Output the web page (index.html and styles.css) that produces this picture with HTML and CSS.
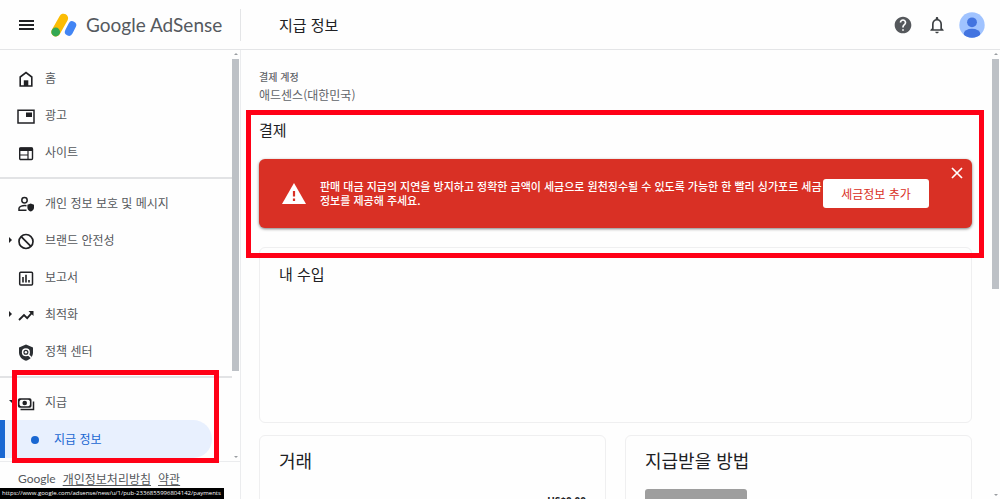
FILE: index.html
```html
<!DOCTYPE html>
<html lang="ko">
<head>
    <meta charset="UTF-8">
    <meta name="viewport" content="width=device-width, initial-scale=1.0">
    <title>지급 정보 - Google AdSense</title>
    <link rel="stylesheet" href="styles.css">
</head>
<body>
    <header class="header">
        <div class="brand">
            <button class="icon-btn" aria-label="메뉴">
                <svg width="16" height="12" viewBox="0 0 16 12"><path d="M1 2h15M1 6h15M1 10h15" stroke="#202124" stroke-width="2"/></svg>
            </button>
            <a class="logo" href="#">
                <svg width="28" height="26" viewBox="0 0 28 26" fill="none" stroke-linecap="round" stroke-width="9">
                    <path d="M13.6 6.2L5.8 20" stroke="#fbbc04"/>
                    <path d="M22.2 13.3L18.9 19.8" stroke="#4285f4" stroke-width="8"/>
                    <circle cx="5.7" cy="20" r="4.4" fill="#34a853"/>
                </svg>
                <span class="logo-text"><b>Google</b> AdSense</span>
            </a>
        </div>
        <h1>지급 정보</h1>
        <div class="actions">
            <button class="icon-btn" aria-label="도움말">
                <svg width="20" height="20" viewBox="0 0 24 24" fill="#55585c"><path d="M12 2C6.48 2 2 6.48 2 12s4.48 10 10 10 10-4.480 10-10S17.520 2 12 2zm1 17h-2v-2h2v2zm2.070-7.750l-.9.920C13.450 12.900 13 13.500 13 15h-2v-.5c0-1.100.45-2.100 1.170-2.830l1.240-1.260c.37-.36.59-.86.59-1.410 0-1.100-.9-2-2-2s-2 .9-2 2H8c0-2.210 1.790-4 4-4s4 1.790 4 4c0 .88-.36 1.680-.93 2.250z"/></svg>
            </button>
            <button class="icon-btn" aria-label="알림">
                <svg width="20" height="20" viewBox="0 0 24 24" fill="#3c4043"><path d="M12 22c1.100 0 2-.9 2-2h-4c0 1.100.9 2 2 2zm6-6v-5c0-3.070-1.630-5.640-4.500-6.320V4c0-.83-.67-1.500-1.500-1.500s-1.500.67-1.500 1.500v.68C7.640 5.360 6 7.920 6 11v5l-2 2v1h16v-1l-2-2zm-2 1H8v-6c0-2.480 1.510-4.500 4-4.500s4 2.020 4 4.500v6z"/></svg>
            </button>
            <button class="icon-btn" aria-label="계정">
                <svg width="26" height="26" viewBox="0 0 26 26">
                    <clipPath id="face"><circle cx="13" cy="13" r="12.700"/></clipPath>
                    <g clip-path="url(#face)">
                        <path d="M0 0h26v26H0z" fill="#a0c3ff"/>
                        <circle cx="13" cy="10.300" r="4.900" fill="#4374e0"/>
                        <ellipse cx="13" cy="21.800" rx="8.300" ry="5" fill="#4374e0"/>
                    </g>
                </svg>
            </button>
        </div>
    </header>

    <div class="page">
        <aside class="sidebar">
            <div class="scroll-area">
                <nav class="nav">
                    <ul class="nav-group">
                        <li><a href="#"><span class="caret"></span><svg viewBox="0 0 18 18"><path d="M3.200 7L9 2.600 14.800 7v9H3.200z" fill="none" stroke="#202124" stroke-width="1.600"/><path d="M6.800 10.300h4.500V16H6.800z" fill="#202124"/></svg>홈</a></li>
                        <li><a href="#"><span class="caret"></span><svg viewBox="0 0 18 18"><path d="M1 3.200h16v12.800H1z" fill="none" stroke="#202124" stroke-width="1.500"/><path d="M9 5.500h6v4.500H9z" fill="#202124"/></svg>광고</a></li>
                        <li><a href="#"><span class="caret"></span><svg viewBox="0 0 18 18"><rect x="2.700" y="4" width="12.800" height="11.500" rx="1" fill="none" stroke="#202124" stroke-width="1.400"/><path d="M2.500 3.500h13V7h-13z" fill="#202124"/><path d="M3 11h7.500M11 7v8" stroke="#202124" stroke-width="1.200"/></svg>사이트</a></li>
                    </ul>
                    <ul class="nav-group">
                        <li><a href="#"><span class="caret"></span><svg viewBox="0 0 18 18"><circle cx="7.500" cy="5.300" r="2.700" fill="none" stroke="#202124" stroke-width="1.500"/><path d="M9.500 10.700C5.500 10 2 11.800 2 13.300v1.900h7.500" fill="none" stroke="#202124" stroke-width="1.500"/><path d="M13.700 8.500l3.300 1.300v2.700c0 2-1.400 3.500-3.300 4-1.900-.5-3.300-2-3.300-4V9.800z" fill="#202124"/></svg>개인 정보 보호 및 메시지</a></li>
                        <li><a href="#"><span class="caret closed"></span><svg viewBox="0 0 18 18"><g fill="none" stroke="#202124" stroke-width="1.700"><circle cx="9" cy="9.500" r="7"/><path d="M4.200 4.700l9.700 9.700"/></g></svg>브랜드 안전성</a></li>
                        <li><a href="#"><span class="caret"></span><svg viewBox="0 0 18 18"><rect x="2.700" y="3.200" width="12.800" height="12.800" rx="1" fill="none" stroke="#202124" stroke-width="1.500"/><path d="M6 8v5.500M9 5.800v7.700M12 11v2.500" stroke="#202124" stroke-width="1.600"/></svg>보고서</a></li>
                        <li><a href="#"><span class="caret closed"></span><svg viewBox="0 0 18 18"><path d="M2 14l5-5 3.200 3.200 5.300-6" fill="none" stroke="#202124" stroke-width="1.800"/><path d="M11.500 5h5v5z" fill="#202124"/></svg>최적화</a></li>
                        <li><a href="#"><span class="caret"></span><svg viewBox="0 0 18 18"><path d="M9 1.500l7 3v5c0 4-2.900 7-7 8.300-4.100-1.300-7-4.300-7-8.300v-5z" fill="#2b2f33"/><circle cx="8.900" cy="9.300" r="3.300" fill="none" stroke="#fff" stroke-width="1.500"/><circle cx="8.900" cy="9.300" r="1.200" fill="#fff"/><path d="M11.200 11.600l3.200 3.200" stroke="#fff" stroke-width="1.500"/></svg>정책 센터</a></li>
                    </ul>
                    <ul class="nav-group">
                        <li><a href="#"><span class="caret open"></span><svg viewBox="0 0 18 18"><rect x="1.700" y="5" width="12" height="8" rx="1" fill="none" stroke="#202124" stroke-width="1.600"/><circle cx="7.700" cy="9" r="2.300" fill="#202124"/><path d="M2 5h2.500L2 7.500zM13.500 13H11l2.500-2.500zM2 13v-2.500L4.500 13zM13.500 5v2.500L11 5z" fill="#202124"/><path d="M3.500 15.500h13V7.500" fill="none" stroke="#202124" stroke-width="1.500"/></svg>지급</a></li>
                        <li class="selected"><a href="#"><span class="dot"></span>지급 정보</a></li>
                    </ul>
                </nav>
                <div class="scrollbar"><i class="up"></i><div class="thumb nav-thumb"></div><i class="down"></i></div>
            </div>
            <footer class="links">
                <span class="google">Google</span>
                <a href="#">개인정보처리방침</a>
                <a href="#">약관</a>
            </footer>
            <div class="highlight menu-highlight"></div>
        </aside>

        <main class="main">
            <div class="content">
                <div class="account">
                    <div class="account-label">결제 계정</div>
                    <div class="account-name">애드센스(대한민국)</div>
                </div>
                <section class="payment">
                    <h2>결제</h2>
                    <div class="alert">
                        <svg class="warning" width="24" height="21" viewBox="0 0 24 21"><path d="M12 0l12 21H0z" fill="#fff"/><path d="M12 8v5.500M12 15.500v2.500" stroke="#d93025" stroke-width="2.200"/></svg>
                        <p>판매 대금 지급의 지연을 방지하고 정확한 금액이 세금으로 원천징수될 수 있도록 가능한 한 빨리 싱가포르 세금 정보를 제공해 주세요.</p>
                        <button class="tax-btn">세금정보 추가</button>
                        <button class="icon-btn close" aria-label="닫기">
                            <svg width="12" height="12" viewBox="0 0 12 12"><path d="M1 1l10 10M11 1L1 11" stroke="#fff" stroke-width="1.700"/></svg>
                        </button>
                    </div>
                    <div class="highlight payment-highlight"></div>
                </section>
                <section class="card earnings">
                    <h2>내 수입</h2>
                </section>
                <div class="row">
                    <section class="card">
                        <h3>거래</h3>
                        <div class="amount">US$0.00</div>
                    </section>
                    <section class="card">
                        <h3>지급받을 방법</h3>
                        <div class="method"></div>
                    </section>
                </div>
            </div>
            <div class="scrollbar"><i class="up"></i><div class="thumb main-thumb"></div><i class="down"></i></div>
        </main>
    </div>

    <div class="status">https://www.google.com/adsense/new/u/1/pub-2336855996804142/payments</div>
</body>
</html>
```

FILE: styles.css
```css
* {
    box-sizing: border-box;
}
body {
    display: flex;
    flex-direction: column;
    height: 100vh;
    margin: 0;
    overflow: hidden;
    background: #fefefe;
    color: #202124;
    font-family: "Noto Sans CJK KR", sans-serif;
    font-size: 12px;
    line-height: 18px;
}
h1, h2, h3, p, ul {
    margin: 0;
    padding: 0;
    font-weight: 400;
}
ul {
    list-style: none;
}
svg {
    display: block;
    flex: none;
}
button {
    border: 0;
    padding: 0;
    background: none;
    font-family: inherit;
    cursor: pointer;
}

/* 상단 바 */
.header {
    display: flex;
    align-items: center;
    flex: none;
    height: 50px;
    border-bottom: 1px solid #e4e5e7;
}
.brand {
    display: flex;
    align-items: center;
    gap: 16px;
    width: 241px;
    height: 32px;
    padding-left: 18px;
    border-right: 1px solid #e4e5e7;
}
.logo {
    display: flex;
    align-items: center;
    gap: 8px;
    color: #55595e;
    text-decoration: none;
}
.logo-text {
    font-family: Lato, sans-serif;
    font-size: 19px;
    line-height: 24px;
    white-space: nowrap;
}
.logo-text b {
    font-weight: 400;
}
.header h1 {
    flex: 1;
    padding-left: 38px;
    font-size: 15px;
    line-height: 20px;
}
.actions {
    display: flex;
    align-items: center;
    gap: 14px;
    padding-right: 15px;
}
.actions .icon-btn:last-child {
    margin-left: -2px;
}

.page {
    display: flex;
    flex: 1;
    min-height: 0;
}

/* 왼쪽 메뉴 */
.sidebar {
    position: relative;
    display: flex;
    flex-direction: column;
    flex: none;
    width: 241px;
    border-right: 1px solid #ebecee;
}
.scroll-area {
    display: flex;
    flex: 1;
    min-height: 0;
}
.nav {
    flex: 1;
    padding-top: 9px;
    overflow: hidden;
}
.nav-group {
    padding-bottom: 7px;
}
.nav-group + .nav-group {
    padding-top: 5px;
    border-top: 2px solid #e2e3e5;
}
.nav a {
    display: flex;
    align-items: center;
    height: 37px;
    padding-left: 7px;
    color: #55585c;
    text-decoration: none;
}
.nav svg {
    width: 18px;
    height: 18px;
    margin: 2px 10px 0 3px;
}
.caret {
    width: 7px;
}
.caret.closed::before,
.caret.open::before {
    content: "";
    display: block;
    width: 0;
    margin-left: 2px;
    border: 3px solid transparent;
}
.caret.closed::before {
    border-left-color: #202124;
    border-right: 0;
}
.caret.open::before {
    border-top-color: #202124;
    border-bottom: 0;
}
.nav .selected a {
    height: 38px;
    margin-right: 20px;
    padding-left: 26px;
    border-left: 5px solid #1967d2;
    border-radius: 0 19px 19px 0;
    background: #e8f0fe;
    color: #1967d2;
}
.dot {
    width: 8px;
    height: 8px;
    margin: 2px 15px 0 0;
    border-radius: 50%;
    background: #1967d2;
}
.links {
    display: flex;
    gap: 7px;
    flex: none;
    height: 38px;
    padding: 8px 18px 0;
    border-top: 1px solid #ebecee;
}
.links a {
    color: #55585c;
    text-underline-offset: 1px;
    text-decoration-skip-ink: none;
}
.google {
    color: #55585c;
    font-family: Lato, sans-serif;
}

/* 스크롤바 */
.scrollbar {
    display: flex;
    flex-direction: column;
    align-items: center;
    flex: none;
    width: 8px;
    padding: 3px 1px 3px 0;
}
.scrollbar i {
    border: 2px solid transparent;
}
.scrollbar .up {
    border-bottom-color: #9a9da1;
    border-top: 0;
}
.scrollbar .down {
    margin-top: auto;
    border-top-color: #9a9da1;
    border-bottom: 0;
}
.thumb {
    width: 7px;
    margin-top: 4px;
    background: #bdc1c6;
}
.nav-thumb {
    height: 77%;
}
.main-thumb {
    height: 52%;
}

/* 본문 */
.main {
    display: flex;
    flex: 1;
    min-width: 0;
}
.content {
    flex: 1;
    min-width: 0;
    padding: 18px 20px 0 18px;
    overflow: hidden;
}
.account {
    color: #5f6368;
}
.account-label {
    font-size: 10px;
    font-weight: 500;
}
.payment {
    position: relative;
    padding-top: 14px;
}
.payment h2,
.card h2 {
    font-size: 15px;
    line-height: 24px;
}
.alert {
    position: relative;
    display: flex;
    align-items: center;
    height: 69px;
    margin-top: 17px;
    padding: 0 43px 0 23px;
    border-radius: 6px;
    background: #d93025;
    box-shadow: 0 1px 3px rgba(0, 0, 0, 0.5);
    color: #fff;
}
.alert p {
    flex: 1;
    padding: 0 0 2px 14px;
    font-size: 11px;
    font-weight: 500;
    line-height: 14px;
}
.tax-btn {
    width: 106px;
    height: 29px;
    border-radius: 3px;
    background: #fff;
    color: #d93025;
    font-size: 12px;
}
.close {
    position: absolute;
    top: 8px;
    right: 9px;
}
.card {
    padding: 14px 19px;
    border: 1px solid #efeff0;
    border-radius: 6px;
}
.earnings {
    height: 176px;
    margin-top: 19px;
}
.row {
    display: flex;
    gap: 19px;
    margin-top: 12px;
}
.row .card {
    flex: 1;
    height: 180px;
    padding-top: 12px;
}
.card h3 {
    font-size: 18px;
    line-height: 24px;
}
.amount {
    margin-top: 20px;
    font-family: "Open Sans", sans-serif;
    font-size: 10px;
    font-weight: 700;
    text-align: right;
}
.method {
    width: 102px;
    height: 60px;
    margin-top: 17px;
    border-radius: 3px;
    background: #9e9e9e;
}

/* 강조 표시 */
.highlight {
    position: absolute;
    z-index: 2;
    border: 5px solid #ff0016;
    pointer-events: none;
}
.payment-highlight {
    inset: 6px -12px -30px -13px;
}
.menu-highlight {
    right: 21px;
    bottom: 36px;
    left: 12px;
    height: 93px;
}

.status {
    position: fixed;
    bottom: 0;
    left: 0;
    z-index: 3;
    padding: 0 3px 0 2px;
    background: #000;
    color: #fff;
    font-family: "Liberation Sans Narrow", "Open Sans", sans-serif;
    font-size: 6px;
    line-height: 11px;
}
```
